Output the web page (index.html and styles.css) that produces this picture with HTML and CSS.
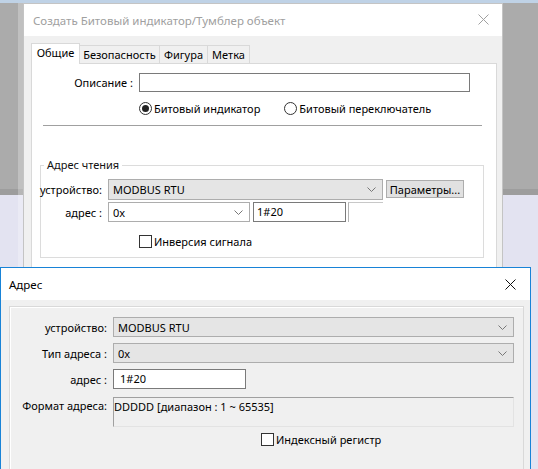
FILE: index.html
```html
<!DOCTYPE html>
<html lang="ru">
<head>
<meta charset="utf-8">
<title>Адрес</title>
<link rel="stylesheet" href="styles.css">
</head>
<body>
<div class="desktop">
  <div class="win win1">
    <div class="titlebar">
      <span class="title">Создать Битовый индикатор/Тумблер объект</span>
      <svg class="close" width="11" height="11" viewBox="0 0 11 11"><path d="M0.5 0.5 L10.5 10.5 M10.5 0.5 L0.5 10.5" stroke="#a0a0a0" stroke-width="1" fill="none"/></svg>
    </div>
    <div class="winbody">
      <div class="tabs">
        <div class="tab active tab-gen">Общие</div>
        <div class="tab tab-sec">Безопасность</div>
        <div class="tab tab-fig">Фигура</div>
        <div class="tab tab-lab">Метка</div>
      </div>
      <div class="panel">
        <div class="desc-row">
          <div class="lbl lbl-desc">Описание :</div>
          <div class="textbox tb-desc"></div>
        </div>
        <div class="radios">
          <div class="radio"><span class="circle checked"></span><span>Битовый индикатор</span></div>
          <div class="radio"><span class="circle"></span><span>Битовый переключатель</span></div>
        </div>
        <div class="sep"></div>
        <fieldset class="group">
          <legend>Адрес чтения</legend>
          <div class="grow">
            <div class="lbl lbl-g">устройство:</div>
            <div class="combo combo-gray cb-dev1"><span>MODBUS RTU</span><svg class="chev" width="9" height="5" viewBox="0 0 9 5"><path d="M0.5 0.5 L4.5 4.5 L8.5 0.5" stroke="#777" fill="none"/></svg></div>
            <div class="btn">Параметры...</div>
          </div>
          <div class="grow grow2">
            <div class="lbl lbl-g">адрес :</div>
            <div class="combo combo-white cb-addr1"><span>0x</span><svg class="chev" width="9" height="5" viewBox="0 0 9 5"><path d="M0.5 0.5 L4.5 4.5 L8.5 0.5" stroke="#777" fill="none"/></svg></div>
            <div class="textbox tb-addr1">1#20</div>
            <div class="ghost"></div>
          </div>
          <div class="check check1"><span class="box"></span><span>Инверсия сигнала</span></div>
        </fieldset>
      </div>
    </div>
  </div>

  <div class="win win2">
    <div class="titlebar tb2">
      <span class="title title2">Адрес</span>
      <svg class="close" width="11" height="11" viewBox="0 0 11 11"><path d="M0.5 0.5 L10.5 10.5 M10.5 0.5 L0.5 10.5" stroke="#111" stroke-width="1" fill="none"/></svg>
    </div>
    <div class="winbody2">
      <div class="frame">
        <div class="frow">
          <div class="lbl lbl-f">устройство:</div>
          <div class="combo combo-gray cb-wide"><span>MODBUS RTU</span><svg class="chev" width="9" height="5" viewBox="0 0 9 5"><path d="M0.5 0.5 L4.5 4.5 L8.5 0.5" stroke="#777" fill="none"/></svg></div>
        </div>
        <div class="frow">
          <div class="lbl lbl-f">Тип адреса :</div>
          <div class="combo combo-gray cb-wide"><span>0x</span><svg class="chev" width="9" height="5" viewBox="0 0 9 5"><path d="M0.5 0.5 L4.5 4.5 L8.5 0.5" stroke="#777" fill="none"/></svg></div>
        </div>
        <div class="frow">
          <div class="lbl lbl-f">адрес :</div>
          <div class="textbox tb-addr2">1#20</div>
        </div>
        <div class="frow frow-fmt">
          <div class="lbl lbl-f">Формат адреса:</div>
          <div class="fmtbox">DDDDD [диапазон : 1 ~ 65535]</div>
        </div>
        <div class="check check2"><span class="box"></span><span>Индексный регистр</span></div>
      </div>
    </div>
  </div>
</div>
</body>
</html>
```
FILE: styles.css
```css
* { box-sizing: border-box; }
html, body { margin: 0; padding: 0; }
body {
  width: 538px;
  height: 469px;
  overflow: hidden;
  font-family: "Noto Sans", "Open Sans", sans-serif;
  font-size: 11px;
  color: #000;
}
.desktop {
  position: relative;
  width: 538px;
  height: 469px;
  overflow: hidden;
  background:
    linear-gradient(#bfd2e6 0, #bfd2e6 3px, transparent 3px),
    linear-gradient(to right, transparent 18px, rgba(255,255,255,0.25) 18px, rgba(255,255,255,0.25) 23px, transparent 23px),
    linear-gradient(to bottom, #ababab 0, #ababab 189px, #9d9d9d 189px, #9d9d9d 195px, #e3e3f1 195px);
}
.win {
  position: absolute;
  background: #f0f0f0;
}
.win1 {
  left: 23px;
  top: 3px;
  width: 480px;
  height: 490px;
  border: 1px solid #c4c4c4;
}
.titlebar {
  height: 32px;
  background: #fff;
  display: flex;
  align-items: center;
  justify-content: space-between;
  padding: 0 9px 0 9px;
}
.title { color: #a0a0a0; font-size: 11.5px; }
.title2 { color: #000; }
.win1 .close { margin-right: 4px; margin-top: -1px; }
.tb2 { padding: 0 8px 0 8px; }
.tb2 .close { margin-right: 6px; }

.winbody { padding: 7px 0 0 7px; }
.tabs { display: flex; align-items: flex-end; height: 20px; position: relative; z-index: 1; }
.tab {
  height: 18px;
  line-height: 17px;
  border: 1px solid #d9d9d9;
  border-bottom: none;
  margin-left: -1px;
  background: #f0f0f0;
  color: #000;
  text-align: center;
  flex: none;
}
.tab.active {
  height: 21px;
  margin-left: 0;
  background: #fff;
  line-height: 18px;
  margin-bottom: -1px;
}
.tab-gen { width: 49px; }
.tab-sec { width: 81px; }
.tab-fig { width: 49px; }
.tab-lab { width: 43px; }
.panel {
  width: 466px;
  height: 420px;
  background: #fff;
  border: 1px solid #d9d9d9;
}
.lbl {
  display: flex;
  justify-content: flex-end;
  white-space: nowrap;
  flex: none;
}
.desc-row {
  display: flex;
  align-items: center;
  margin-top: 9px;
  gap: 6px;
}
.lbl-desc { width: 101px; }
.textbox {
  background: #fff;
  border: 1px solid #7a7a7a;
  padding: 0 3px;
  line-height: 17px;
  white-space: nowrap;
  flex: none;
}
.tb-desc { width: 331px; height: 19px; }
.radios {
  display: flex;
  gap: 24px;
  margin: 9px 0 0 107px;
  height: 14px;
  align-items: center;
}
.radio { display: flex; align-items: center; gap: 2px; }
.circle {
  width: 13px;
  height: 13px;
  border: 1px solid #333;
  border-radius: 50%;
  display: flex;
  align-items: center;
  justify-content: center;
}
.circle.checked::after {
  content: "";
  width: 7px;
  height: 7px;
  border-radius: 50%;
  background: #222;
}
.sep {
  height: 1px;
  background: #a0a0a0;
  margin: 10px 14px 0 11px;
}
.group {
  margin: 31px 0 0 8px;
  width: 444px;
  padding: 6px 0 9px 0;
  border: 1px solid #dcdcdc;
  min-width: 0;
}
.group legend {
  padding: 0 3px;
  margin-left: 3px;
  line-height: 16px;
  color: #111;
}
.grow {
  display: flex;
  align-items: flex-start;
}
.grow2 { margin-top: 2px; }
.lbl-g { width: 61px; height: 21px; align-items: center; margin-right: 6px; }
.grow2 .lbl-g { height: 20px; }
.combo {
  display: flex;
  align-items: center;
  justify-content: space-between;
  padding: 0 6px 0 4px;
  border: 1px solid #adadad;
  flex: none;
}
.combo-gray { background: #e5e5e5; }
.combo-white { background: #fff; border-color: #adadad; }
.cb-dev1 { width: 275px; height: 21px; }
.cb-addr1 { width: 142px; height: 20px; }
.btn {
  width: 78px;
  height: 18px;
  margin: 1px 0 0 3px;
  background: #e1e1e1;
  border: 1px solid #adadad;
  display: flex;
  align-items: center;
  justify-content: center;
  flex: none;
}
.tb-addr1 { width: 93px; height: 20px; margin-left: 3px; line-height: 18px; }
.ghost {
  width: 35px;
  height: 20px;
  margin-left: 2px;
  border-top: 1px solid #c8c8c8;
  border-left: 1px solid #b4b4b4;
  flex: none;
}
.check { display: flex; align-items: center; gap: 2px; height: 14px; }
.box {
  width: 13px;
  height: 13px;
  border: 1px solid #333;
  background: #fff;
  flex: none;
}
.check1 { margin: 12px 0 0 98px; }

.win2 {
  left: 0;
  top: 267px;
  width: 531px;
  height: 220px;
  border: 1px solid #1883d7;
}
.winbody2 { padding: 6px 6px 0 8px; }
.frame {
  width: 515px;
  height: 200px;
  border: 1px solid #d9d9d9;
  box-shadow: inset 1px 1px 0 #fff;
  padding-top: 10px;
  display: flex;
  flex-direction: column;
  gap: 6px;
}
.frow { display: flex; align-items: center; gap: 6px; }
.lbl-f { width: 97px; }
.cb-wide { width: 401px; height: 20px; }
.tb-addr2 { width: 133px; height: 20px; line-height: 18px; padding-left: 6px; }
.frow-fmt { align-items: flex-start; margin-top: 2px; }
.frow-fmt .lbl-f { line-height: 18px; }
.fmtbox {
  width: 401px;
  height: 30px;
  border-top: 1px solid #a0a0a0;
  border-left: 1px solid #a0a0a0;
  border-right: 1px solid #e3e3e3;
  border-bottom: 1px solid #e3e3e3;
  line-height: 17px;
  padding-left: 0;
  white-space: nowrap;
}
.check2 { margin: -1px 0 0 251px; }
```
